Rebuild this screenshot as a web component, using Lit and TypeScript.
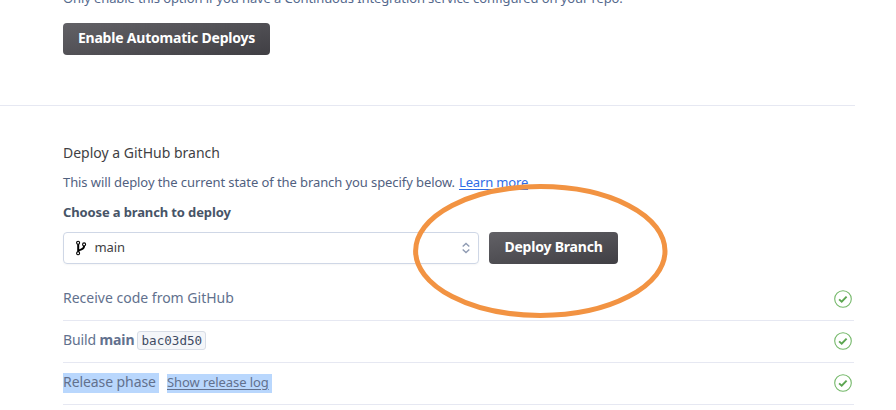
import { LitElement, html, css, svg } from "lit";
import { customElement } from "lit/decorators.js";

const check = svg`<circle cx="9" cy="9" r="8.3" fill="none" stroke="#74b869" stroke-width="1.1"/><path d="M5.1 9.4 L7.7 11.7 L12.6 6.7" fill="none" stroke="#5ba550" stroke-width="1.9"/>`;

@customElement("app-root")
export class AppRoot extends LitElement {
  static styles = css`
    :host { display: block; position: relative; width: 896px; height: 410px; overflow: hidden; background: #fff; font-family: "Noto Sans", sans-serif; font-size: 13px; color: #54698d; }
    .line { white-space: nowrap; display: flex; align-items: center; }
    .auto { display: flow-root; height: 106px; width: 855px; border-bottom: 1px solid #e6e8f2; padding-left: 63px; box-sizing: border-box; }
    .ci { height: 20px; margin-top: -12px; letter-spacing: -0.105px; }
    .auto .btn { margin-top: 15px; }
    .btn { display: flex; align-items: center; justify-content: center; box-sizing: border-box; height: 32px; border: 0; border-radius: 4px; padding: 0 0 4px; font: 700 14px "Noto Sans", sans-serif; color: #fff; background: linear-gradient(170deg, #626166, #403f44); white-space: nowrap; }
    .enable { width: 207px; letter-spacing: -0.21px; }
    .branch { width: 129px; letter-spacing: -0.2px; }
    .deploy { padding: 37px 0 0 63px; width: 791px; }
    h2 { margin: 0; height: 20px; font-size: 14px; font-weight: 400; color: #3f3f44; }
    h2 span { margin-top: -2px; }
    .note { height: 20px; margin-top: 9px; letter-spacing: -0.085px; color: #51617f; }
    .note a { color: #2e6be6; margin-left: 4px; text-underline-offset: 2px; letter-spacing: -0.16px; }
    .label { height: 20px; margin-top: 10px; font-weight: 700; color: #475467; letter-spacing: -0.13px; }
    .controls { display: flex; gap: 10px; margin-top: 10px; }
    .select { display: flex; align-items: center; box-sizing: border-box; width: 416px; height: 32px; border: 1px solid #cfd7e6; border-radius: 4px; padding: 0 7px 0 11px; color: #3f3f44; box-shadow: 0 1px 2px #0000000a; }
    .select span { flex: 1; margin: -2px 0 0 6.5px; font-size: 13px; letter-spacing: -0.1px; }
    .rows { margin-top: 15px; }
    .row { height: 42px; box-sizing: border-box; border-bottom: 1px solid #e6e8f2; color: #62718e; font-size: 14px; padding-right: 2px; }
    .row svg { margin-top: -1px; }
    .row .text { flex: 1; display: flex; align-items: center; margin-top: -4px; }
    .build { letter-spacing: -0.12px; }
    code { box-sizing: border-box; height: 19px; width: 69px; margin: 2px 0 0 3px; border: 1px solid #d8dde6; border-radius: 3px; background: #f4f6f9; color: #3f4b63; font: 12.6px/17px "DejaVu Sans Mono", monospace; text-align: center; }
    .selected { background: #b9d7fd; height: 20px; line-height: 18px; letter-spacing: -0.08px; }
    .phase { width: 96px; margin-top: 2px; }
    .log { width: 105px; margin: 3px 0 0 8px; font-size: 13px; line-height: 17px; text-underline-offset: 2px; text-decoration: underline; height: 19px; }
    .ring { position: absolute; left: 412px; top: 182px; }
    svg { display: block; flex: none; }
  `;

  render() {
    return html`
      <section class="auto">
        <div class="line ci">Only enable this option if you have a Continuous Integration service configured on your repo.</div>
        <button class="btn enable">Enable Automatic Deploys</button>
      </section>
      <section class="deploy">
        <h2 class="line"><span>Deploy a GitHub branch</span></h2>
        <div class="line note"><span>This will deploy the current state of the branch you specify below.</span><a href="#">Learn more</a></div>
        <div class="line label"><span>Choose a branch to deploy</span></div>
        <div class="controls">
          <div class="select">
            <svg width="13" height="16" viewBox="0 0 13 16"><g fill="#fff" stroke="#000"><path d="M3.2 4v9M9.1 6c0 3.3-2 2.6-5.4 4.6" fill="none" stroke-width="2"/><circle cx="3.1" cy="2.8" r="1.5" stroke-width="1.1"/><circle cx="9.1" cy="4.4" r="1.5" stroke-width="1.1"/><circle cx="3.1" cy="13.3" r="1.5" stroke-width="1.1"/></g></svg>
            <span>main</span>
            <svg width="10" height="12" viewBox="0 0 10 12"><path d="M1.7 4.5 L5 1.5 L8.3 4.5M1.7 7.5 L5 10.5 L8.3 7.5" fill="none" stroke="#8f9bb3" stroke-width="1.4"/></svg>
          </div>
          <button class="btn branch">Deploy Branch</button>
        </div>
        <div class="rows">
          ${[
            html`<span>Receive code from GitHub</span>`,
            html`<span class="build">Build <b>main</b></span><code>bac03d50</code>`,
            html`<span class="selected phase">Release phase</span><span class="selected log">Show release log</span>`,
          ].map(t => html`<div class="line row"><div class="text">${t}</div><svg width="18" height="18" viewBox="0 0 18 18">${check}</svg></div>`)}
        </div>
      </section>
      <svg class="ring" width="256" height="138" viewBox="0 0 256 138"><ellipse cx="128.3" cy="69" rx="124.7" ry="64.4" fill="none" stroke="#f29342" stroke-width="5"/></svg>
    `;
  }
}
